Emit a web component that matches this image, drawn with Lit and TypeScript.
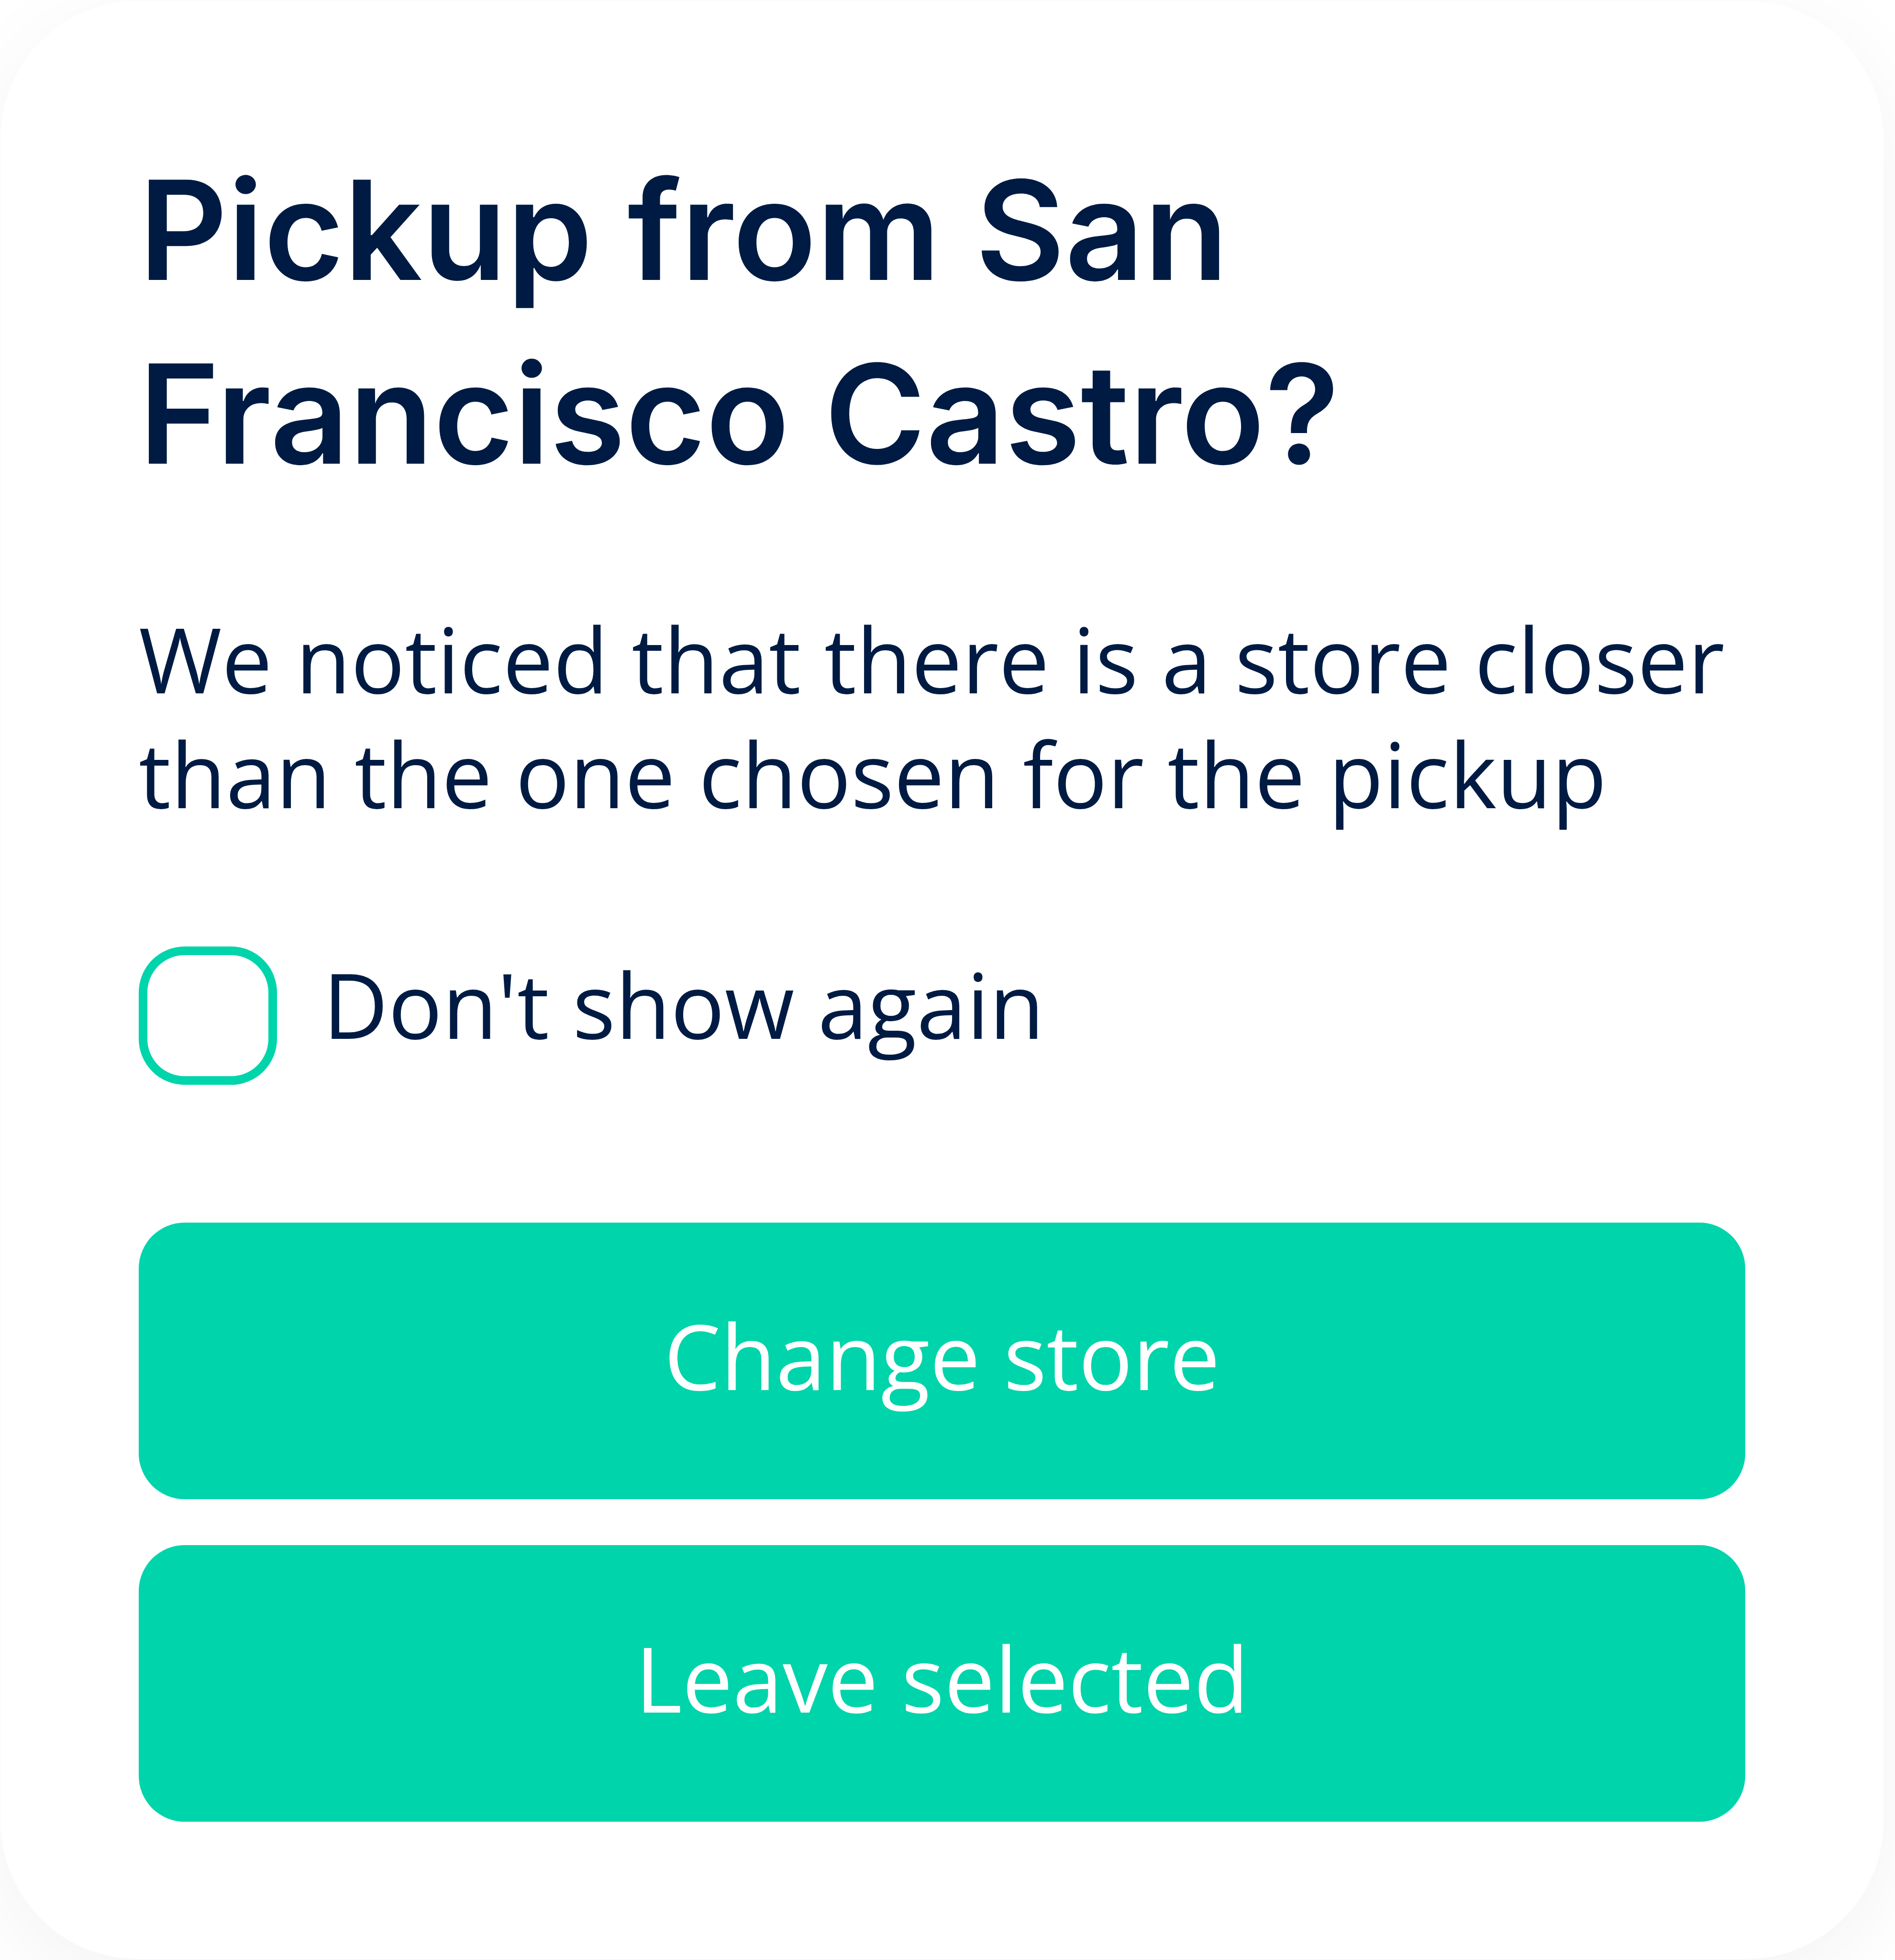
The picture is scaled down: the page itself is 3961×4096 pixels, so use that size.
import { LitElement, html, css } from "lit";
import { customElement, state } from "lit/decorators.js";

@customElement("app-root")
export class AppRoot extends LitElement {
  @state() private dismissed = false;

  static styles = css`
    :host {
      display: flex;
      box-sizing: border-box;
      min-height: 100vh;
      padding: 2px 24px 2px 1px;
      overflow: hidden;
      background: #fff;
      color: #001b43;
    }
    * { box-sizing: border-box; }
    .dialog {
      flex: 1;
      min-width: 0;
      padding: 286px 289px 287px;
      border-radius: 288px;
      background: #fff;
      box-shadow: 0 48px 192px rgba(8, 28, 60, 0.05);
      font: 400 188px/240px "Open Sans", sans-serif;
    }
    .title { margin: 0; font: 600 288px/384px Inter, sans-serif; }
    .message { margin: 200px 0 242px; }
    .option { display: flex; align-items: flex-start; gap: 96px; margin-bottom: 288px; }
    .check {
      appearance: none;
      flex: none;
      margin: 0;
      width: 289px;
      height: 289px;
      border: 18px solid #00d4ab;
      border-radius: 96px;
      background: #fff;
    }
    .check:checked { background: #00d4ab; }
    .actions { display: flex; flex-direction: column; gap: 96px; }
    .action {
      height: 578px;
      padding: 0 0 24px;
      border: 0;
      border-radius: 96px;
      background: #00d4ab;
      color: #fff;
      font: inherit;
      cursor: pointer;
    }
  `;

  private onToggle(event: Event) {
    this.dismissed = (event.target as HTMLInputElement).checked;
  }

  render() {
    return html`
      <main class="dialog">
        <h1 class="title">Pickup from San<br />Francisco Castro?</h1>
        <p class="message">We noticed that there is a store closer than the one chosen for the pickup</p>
        <div class="option">
          <input class="check" id="dismiss" type="checkbox" .checked=${this.dismissed} @change=${this.onToggle} />
          <label for="dismiss">Don't show again</label>
        </div>
        <div class="actions">
          <button class="action" type="button">Change store</button>
          <button class="action" type="button">Leave selected</button>
        </div>
      </main>
    `;
  }
}
